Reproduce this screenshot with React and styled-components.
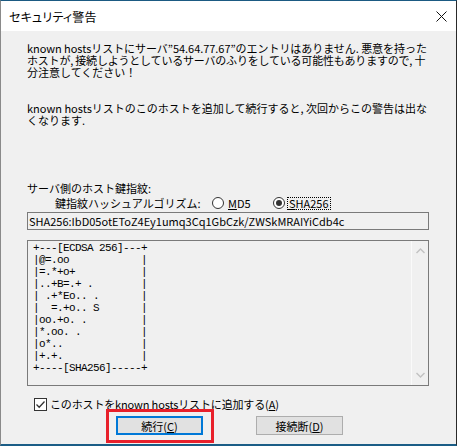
import React from "react"
import styled, { createGlobalStyle } from "styled-components"

const GlobalStyle = createGlobalStyle`
  html, body {
    margin: 0;
    padding: 0;
    background: #f0f0f0;
  }
  * {
    box-sizing: border-box;
  }
`

const JP = `"Noto Sans CJK JP", "Noto Sans", sans-serif`

const Window = styled.div`
  width: 457px;
  height: 446px;
  display: flex;
  flex-direction: column;
  border-top: 1px solid #1b5a82;
  border-left: 1px solid #8a8a8a;
  border-right: 1px solid #2a2a2a;
  border-bottom: 2px solid #1b5d86;
  font-family: ${JP};
  color: #000;
  overflow: hidden;
`

const TitleBar = styled.div`
  height: 30px;
  flex: none;
  background: #fff;
  display: flex;
  align-items: center;
  justify-content: space-between;
  padding: 0 9px 0 8px;
`

const Title = styled.span`
  font-size: 12px;
  font-feature-settings: "palt";
  letter-spacing: 0.2px;
`

const CloseButton = styled.div`
  width: 12px;
  height: 12px;
  display: flex;
  align-items: center;
  justify-content: center;
`

const Body = styled.div`
  flex: 1;
  background: #f0f0f0;
  padding: 11px 27px 0 26px;
  display: flex;
  flex-direction: column;
  font-size: 11px;
  line-height: 12px;
`

const Paragraph = styled.div`
  margin-top: ${(p) => p.$top || 0}px;
`

const Line = styled.div`
  white-space: nowrap;
  height: 12px;
  letter-spacing: ${(p) => p.$tight || 0}px;
`

const AlgoRow = styled.div`
  margin-top: 2px;
  height: 14px;
  padding-left: 28px;
  display: flex;
  align-items: center;
  white-space: nowrap;
`

const AlgoLabel = styled.span`
  width: 157px;
`

const RadioOption = styled.label`
  width: 61px;
  display: flex;
  align-items: center;
`

const RadioCircle = styled.span`
  width: 12px;
  height: 12px;
  border-radius: 50%;
  border: 1px solid #333;
  background: #fff;
  display: flex;
  align-items: center;
  justify-content: center;
  flex: none;

  &::after {
    content: "";
    display: ${(p) => (p.$checked ? "block" : "none")};
    width: 6px;
    height: 6px;
    border-radius: 50%;
    background: #333;
  }
`

const RadioText = styled.span`
  margin-left: 3px;
  padding: 0 1px;
  outline: ${(p) => (p.$focused ? "1px dotted #000" : "none")};
  line-height: 11px;
`

const FingerprintBox = styled.div`
  margin-top: 2px;
  height: 18px;
  border: 1px solid #7a7a7a;
  background: #f0f0f0;
  padding: 0 1px;
  font-size: 11px;
  line-height: 16px;
  white-space: nowrap;
`

const ArtBox = styled.div`
  margin-top: 10px;
  height: 146px;
  border: 1px solid #7a7a7a;
  background: #f0f0f0;
  display: flex;
`

const Art = styled.pre`
  flex: 1;
  margin: 0;
  padding: 1px 5px;
  font-family: "Liberation Mono", "DejaVu Sans Mono", monospace;
  font-size: 11px;
  letter-spacing: -0.6px;
  line-height: 12px;
`

const ScrollBar = styled.div`
  width: 17px;
  border-left: 1px solid #fafafa;
  display: flex;
  flex-direction: column;
  justify-content: space-between;
  align-items: center;
  padding: 7px 0 7px;
`

const CheckRow = styled.label`
  margin-top: 11px;
  height: 14px;
  padding-left: 7px;
  display: flex;
  align-items: center;
  white-space: nowrap;
`

const CheckBox = styled.span`
  width: 13px;
  height: 13px;
  border: 1px solid #333;
  background: #fff;
  display: flex;
  align-items: center;
  justify-content: center;
  flex: none;
`

const CheckText = styled.span`
  margin-left: 3px;
  letter-spacing: -0.15px;
`

const ButtonRow = styled.div`
  margin-top: 5px;
  padding-left: 3px;
  display: flex;
  justify-content: center;
  gap: 53px;
`

const Highlight = styled.div`
  position: relative;

  &::after {
    content: "";
    position: absolute;
    top: -7px;
    bottom: -8px;
    left: -10px;
    right: -11px;
    border: 3px solid #e8202b;
    pointer-events: none;
  }
`

const Button = styled.div`
  width: 87px;
  height: 19px;
  background: #e1e1e1;
  border: ${(p) => (p.$default ? "2px solid #0078d7" : "1px solid #adadad")};
  display: flex;
  align-items: center;
  justify-content: center;
  font-size: 11px;
  white-space: nowrap;
`

const Chevron = ({ up }) => (
  <svg width="9" height="6" viewBox="0 0 9 6">
    <path
      d={up ? "M0.5 5 L4.5 1 L8.5 5" : "M0.5 1 L4.5 5 L8.5 1"}
      fill="none"
      stroke="#c2c2c2"
      strokeWidth="1.4"
    />
  </svg>
)

const art = [
  "+---[ECDSA 256]---+",
  "|@=.oo            |",
  "|=.*+o+           |",
  "|..+B=.+ .        |",
  "| .+*Eo.. .       |",
  "|  =.+o.. S       |",
  "|oo.+o. .         |",
  "|*.oo. .          |",
  "|o*..             |",
  "|+.+.             |",
  "+----[SHA256]-----+",
].join("\n")

const App = () => {
  return (
    <>
      <GlobalStyle />
      <Window>
        <TitleBar>
          <Title>セキュリティ警告</Title>
          <CloseButton>
            <svg width="11" height="11" viewBox="0 0 11 11">
              <path d="M0.5 0.5 L10.5 10.5 M10.5 0.5 L0.5 10.5" stroke="#111" strokeWidth="1" />
            </svg>
          </CloseButton>
        </TitleBar>
        <Body>
          <Paragraph>
            <Line $tight={-0.05}>known hostsリストにサーバ”54.64.77.67”のエントリはありません. 悪意を持った</Line>
            <Line $tight={-0.2}>ホストが, 接続しようとしているサーバのふりをしている可能性もありますので, 十</Line>
            <Line>分注意してください！</Line>
          </Paragraph>
          <Paragraph $top={24}>
            <Line>known hostsリストのこのホストを追加して続行すると, 次回からこの警告は出な</Line>
            <Line>くなります.</Line>
          </Paragraph>
          <Paragraph $top={56}>
            <Line>サーバ側のホスト鍵指紋:</Line>
          </Paragraph>
          <AlgoRow>
            <AlgoLabel>鍵指紋ハッシュアルゴリズム:</AlgoLabel>
            <RadioOption>
              <RadioCircle />
              <RadioText>
                <u>M</u>D5
              </RadioText>
            </RadioOption>
            <RadioOption>
              <RadioCircle $checked />
              <RadioText $focused>
                <u>S</u>HA256
              </RadioText>
            </RadioOption>
          </AlgoRow>
          <FingerprintBox>SHA256:IbD05otEToZ4Ey1umq3Cq1GbCzk/ZWSkMRAIYiCdb4c</FingerprintBox>
          <ArtBox>
            <Art>{art}</Art>
            <ScrollBar>
              <Chevron up />
              <Chevron />
            </ScrollBar>
          </ArtBox>
          <CheckRow>
            <CheckBox>
              <svg width="11" height="11" viewBox="0 0 11 11">
                <path d="M1.5 5.5 L4.2 8.2 L9.5 2.5" fill="none" stroke="#333" strokeWidth="1.3" />
              </svg>
            </CheckBox>
            <CheckText>
              このホストをknown hostsリストに追加する(<u>A</u>)
            </CheckText>
          </CheckRow>
          <ButtonRow>
            <Highlight>
              <Button $default>
                続行(<u>C</u>)
              </Button>
            </Highlight>
            <Button>
              接続断(<u>D</u>)
            </Button>
          </ButtonRow>
        </Body>
      </Window>
    </>
  )
}

export default App
